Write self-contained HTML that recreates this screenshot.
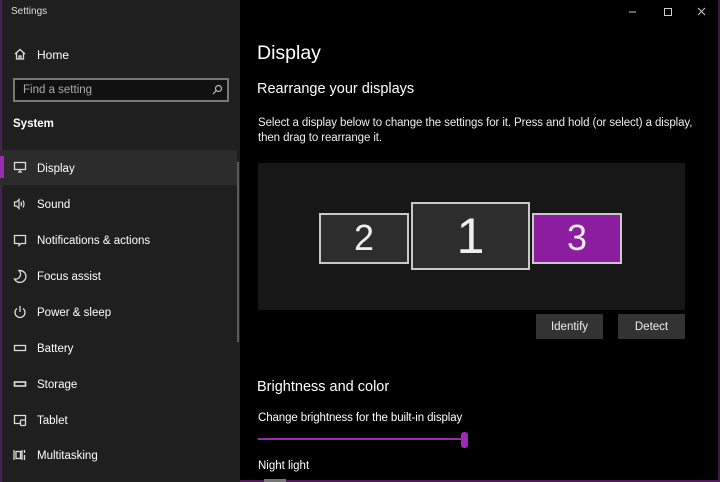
<!DOCTYPE html>
<html><head><style>
*{margin:0;padding:0;box-sizing:border-box}
body{width:720px;height:482px;overflow:hidden;background:#000;font-family:"Liberation Sans",sans-serif;color:#fff;position:relative}
.side{position:absolute;left:0;top:0;width:240px;height:482px;background:#1f1f1f;border-left:2px solid #4a1f55}
.t{position:absolute;font-size:13px;white-space:nowrap}
.ic{position:absolute;left:11px;width:14px;height:14px}
.item{position:absolute;left:35px;font-size:11.5px;margin-top:2px}
.mon{position:absolute;border:2px solid #c8c8c8;background:#2d2d2d;color:#eee;text-align:center;font-weight:300}
.btn{position:absolute;background:#333;color:#eee;font-size:11.5px;text-align:center;line-height:27px;height:25px;width:67px}
</style></head><body>
<div class="side">
<div class="t" style="left:9px;top:6px;font-size:10px;color:#ddd">Settings</div>
<svg class="ic" style="top:47px" viewBox="0 0 14 14" fill="none" stroke="#ddd" stroke-width="1.3"><path d="M2 7L7 2.5L12 7M3.5 6V12H10.5V6M6 12V9H8V12"/></svg>
<div class="item" style="top:46px;font-size:12px">Home</div>
<div style="position:absolute;left:11px;top:78px;width:216px;height:24px;border:2px solid #777;background:#111"></div>
<div class="t" style="left:21px;top:84px;font-size:11.5px;color:#aaa">Find a setting</div>
<svg style="position:absolute;left:209px;top:84px" width="12" height="12" viewBox="0 0 12 12" fill="none" stroke="#bbb" stroke-width="1.2"><circle cx="7.5" cy="4.5" r="3"/><path d="M5.5 6.5L2 10"/></svg>
<div class="t" style="left:11px;top:118px;font-size:11.5px;font-weight:bold">System</div>
<div style="position:absolute;left:-2px;top:150px;width:237px;height:35px;background:#2c2c2c"></div>
<div style="position:absolute;left:-2px;top:156px;width:4px;height:22px;background:#9b2bb0"></div>
<div style="position:absolute;left:235px;top:162px;width:2px;height:180px;background:#5a5a5a"></div>
<svg class="ic" style="top:160px" viewBox="0 0 14 14" fill="none" stroke="#ddd" stroke-width="1.3"><rect x="1.5" y="2.5" width="11" height="7"/><path d="M5 12H9M7 9.5V12"/></svg>
<div class="item" style="top:161px">Display</div>
<svg class="ic" style="top:197px" viewBox="0 0 14 14" fill="none" stroke="#ddd" stroke-width="1.2"><path d="M1.5 5H3.5L6 2.5V11.5L3.5 9H1.5Z M8 5Q9 7 8 9 M10 3.5Q12 7 10 10.5"/></svg>
<div class="item" style="top:197px">Sound</div>
<svg class="ic" style="top:233px" viewBox="0 0 14 14" fill="none" stroke="#ddd" stroke-width="1.3"><path d="M1.5 2.5H12.5V10.5H8L6 12.5V10.5H1.5Z"/></svg>
<div class="item" style="top:233px">Notifications &amp; actions</div>
<svg class="ic" style="top:269px" viewBox="0 0 14 14" fill="none" stroke="#ddd" stroke-width="1.3"><path d="M6 1.5A6 6 0 1 1 1.5 10A5 5 0 0 0 6 1.5Z"/></svg>
<div class="item" style="top:269px">Focus assist</div>
<svg class="ic" style="top:305px" viewBox="0 0 14 14" fill="none" stroke="#ddd" stroke-width="1.3"><path d="M4 3.5A5 5 0 1 0 10 3.5M7 1V7"/></svg>
<div class="item" style="top:305px">Power &amp; sleep</div>
<svg class="ic" style="top:341px" viewBox="0 0 14 14" fill="none" stroke="#ddd" stroke-width="1.3"><rect x="1.5" y="4.5" width="11" height="5"/></svg>
<div class="item" style="top:341px">Battery</div>
<svg class="ic" style="top:377px" viewBox="0 0 14 14" fill="none" stroke="#ddd" stroke-width="1.6"><rect x="1.5" y="5" width="11" height="4"/></svg>
<div class="item" style="top:377px">Storage</div>
<svg class="ic" style="top:413px" viewBox="0 0 14 14" fill="none" stroke="#ddd" stroke-width="1.3"><path d="M7 10.5H1.5V2.5H12.5V7"/><rect x="7.5" y="7" width="5" height="5.5" rx="1"/></svg>
<div class="item" style="top:413px">Tablet</div>
<svg class="ic" style="top:448px" viewBox="0 0 14 14" fill="none" stroke="#ddd" stroke-width="1.3"><path d="M1 2V12M9 2V12M3 3.5H7.5V10.5H3ZM11.5 2V5M11.5 7V12"/></svg>
<div class="item" style="top:448px">Multitasking</div>
</div>
<div style="position:absolute;left:718px;top:0;width:2px;height:482px;background:#3a1a45"></div>
<div style="position:absolute;left:240px;top:480px;width:480px;height:2px;background:#4a1f55"></div>
<svg style="position:absolute;left:625px;top:6px" width="90" height="12" viewBox="0 0 90 12" fill="none" stroke="#ccc" stroke-width="1"><path d="M4 6H11"/><rect x="39.5" y="2.5" width="7" height="7"/><path d="M73 2L80 9M80 2L73 9"/></svg>
<div class="t" style="left:257px;top:42px;font-size:19.5px;font-weight:300">Display</div>
<div class="t" style="left:257px;top:81px;font-size:14.5px">Rearrange your displays</div>
<div class="t" style="left:258px;top:116px;font-size:11.5px;line-height:15px;color:#eee;letter-spacing:-0.1px">Select a display below to change the settings for it. Press and hold (or select) a display,<br>then drag to rearrange it.</div>
<div style="position:absolute;left:258px;top:163px;width:427px;height:147px;background:#171717"></div>
<div class="mon" style="left:319px;top:213px;width:90px;height:51px;font-size:36px;line-height:46px">2</div>
<div class="mon" style="left:411px;top:202px;width:119px;height:68px;font-size:50px;line-height:64px">1</div>
<div class="mon" style="left:532px;top:213px;width:90px;height:51px;font-size:36px;line-height:46px;background:#8c1d9f">3</div>
<div class="btn" style="left:536px;top:314px">Identify</div>
<div class="btn" style="left:618px;top:314px">Detect</div>
<div class="t" style="left:257px;top:379px;font-size:14.5px">Brightness and color</div>
<div class="t" style="left:258px;top:412px;font-size:11.5px;letter-spacing:-0.1px">Change brightness for the built-in display</div>
<div style="position:absolute;left:258px;top:438px;width:207px;height:2px;background:#9b2bb0"></div>
<div style="position:absolute;left:461px;top:432px;width:7px;height:16px;border-radius:3px;background:#9b2bb0"></div>
<div class="t" style="left:258px;top:460px;font-size:11.5px">Night light</div>
<div style="position:absolute;left:264px;top:479px;width:22px;height:3px;background:#777"></div>
</body></html>
